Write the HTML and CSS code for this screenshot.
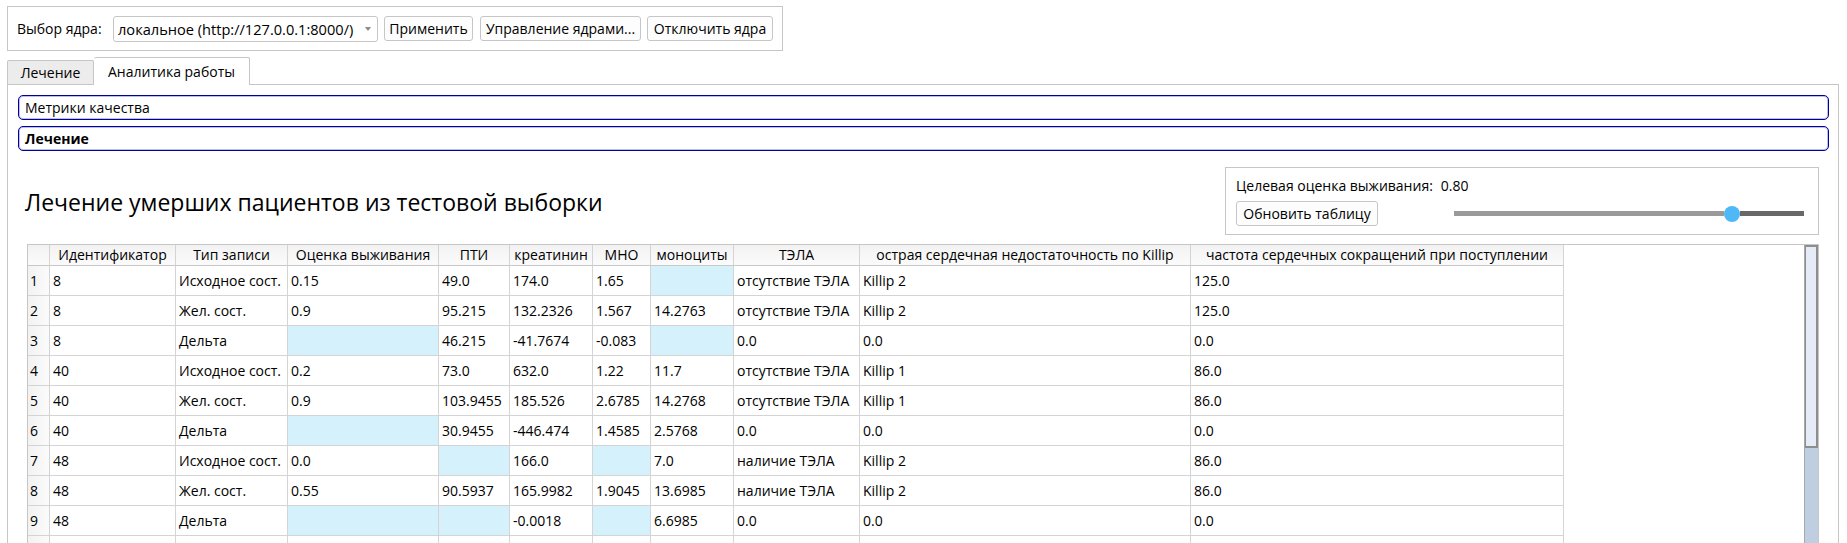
FILE: index.html
```html
<!DOCTYPE html>
<html lang="ru">
<head>
<meta charset="utf-8">
<title>Аналитика работы</title>
<link rel="stylesheet" href="styles.css">
</head>
<body>
<div class="app">
  <div class="kernel-bar">
    <span class="kb-label">Выбор ядра:</span>
    <div class="combo"><span class="combo-text">локальное (http://127.0.0.1:8000/)</span><span class="combo-arrow"></span></div>
    <button class="btn btn-apply">Применить</button>
    <button class="btn btn-manage">Управление ядрами...</button>
    <button class="btn btn-off">Отключить ядра</button>
  </div>

  <div class="tabs">
    <div class="tab">Лечение</div>
    <div class="tab tab-active">Аналитика работы</div>
  </div>

  <div class="pane">
    <div class="group">Метрики качества</div>
    <div class="group group-bold">Лечение</div>

    <div class="content">
      <div class="head-row">
        <h1 class="title">Лечение умерших пациентов из тестовой выборки</h1>
        <div class="panel">
          <div class="panel-row1">
            <span>Целевая оценка выживания:</span>
            <span class="panel-value">0.80</span>
          </div>
          <div class="panel-row2">
            <button class="btn btn-refresh">Обновить таблицу</button>
            <div class="slider">
              <div class="groove-left"></div>
              <div class="handle"></div>
              <div class="groove-right"></div>
            </div>
          </div>
        </div>
      </div>

      <div class="table-frame">
        <div class="grid">
          <div class="hc"></div>
          <div class="hc">Идентификатор</div>
          <div class="hc">Тип записи</div>
          <div class="hc">Оценка выживания</div>
          <div class="hc">ПТИ</div>
          <div class="hc">креатинин</div>
          <div class="hc">МНО</div>
          <div class="hc">моноциты</div>
          <div class="hc">ТЭЛА</div>
          <div class="hc">острая сердечная недостаточность по Killip</div>
          <div class="hc">частота сердечных сокращений при поступлении</div>

          <div class="rn">1</div><div class="c">8</div><div class="c">Исходное сост.</div><div class="c">0.15</div><div class="c">49.0</div><div class="c">174.0</div><div class="c">1.65</div><div class="c na"></div><div class="c">отсутствие ТЭЛА</div><div class="c">Killip 2</div><div class="c">125.0</div>

          <div class="rn">2</div><div class="c">8</div><div class="c">Жел. сост.</div><div class="c">0.9</div><div class="c">95.215</div><div class="c">132.2326</div><div class="c">1.567</div><div class="c">14.2763</div><div class="c">отсутствие ТЭЛА</div><div class="c">Killip 2</div><div class="c">125.0</div>

          <div class="rn">3</div><div class="c">8</div><div class="c">Дельта</div><div class="c na"></div><div class="c">46.215</div><div class="c">-41.7674</div><div class="c">-0.083</div><div class="c na"></div><div class="c">0.0</div><div class="c">0.0</div><div class="c">0.0</div>

          <div class="rn">4</div><div class="c">40</div><div class="c">Исходное сост.</div><div class="c">0.2</div><div class="c">73.0</div><div class="c">632.0</div><div class="c">1.22</div><div class="c">11.7</div><div class="c">отсутствие ТЭЛА</div><div class="c">Killip 1</div><div class="c">86.0</div>

          <div class="rn">5</div><div class="c">40</div><div class="c">Жел. сост.</div><div class="c">0.9</div><div class="c">103.9455</div><div class="c">185.526</div><div class="c">2.6785</div><div class="c">14.2768</div><div class="c">отсутствие ТЭЛА</div><div class="c">Killip 1</div><div class="c">86.0</div>

          <div class="rn">6</div><div class="c">40</div><div class="c">Дельта</div><div class="c na"></div><div class="c">30.9455</div><div class="c">-446.474</div><div class="c">1.4585</div><div class="c">2.5768</div><div class="c">0.0</div><div class="c">0.0</div><div class="c">0.0</div>

          <div class="rn">7</div><div class="c">48</div><div class="c">Исходное сост.</div><div class="c">0.0</div><div class="c na"></div><div class="c">166.0</div><div class="c na"></div><div class="c">7.0</div><div class="c">наличие ТЭЛА</div><div class="c">Killip 2</div><div class="c">86.0</div>

          <div class="rn">8</div><div class="c">48</div><div class="c">Жел. сост.</div><div class="c">0.55</div><div class="c">90.5937</div><div class="c">165.9982</div><div class="c">1.9045</div><div class="c">13.6985</div><div class="c">наличие ТЭЛА</div><div class="c">Killip 2</div><div class="c">86.0</div>

          <div class="rn">9</div><div class="c">48</div><div class="c">Дельта</div><div class="c na"></div><div class="c na"></div><div class="c">-0.0018</div><div class="c na"></div><div class="c">6.6985</div><div class="c">0.0</div><div class="c">0.0</div><div class="c">0.0</div>

          <div class="rn"></div><div class="c"></div><div class="c"></div><div class="c"></div><div class="c"></div><div class="c"></div><div class="c"></div><div class="c"></div><div class="c"></div><div class="c"></div><div class="c"></div>
        </div>
        <div class="scrollbar"><div class="thumb"></div></div>
      </div>
    </div>
  </div>
</div>
</body>
</html>
```

FILE: styles.css
```css
* {
  box-sizing: border-box;
}

html, body {
  margin: 0;
  padding: 0;
  background: #ffffff;
  overflow: hidden;
}

body {
  font-family: "Open Sans", "Noto Sans", sans-serif;
  font-size: 14px;
  color: #000;
  height: 543px;
}

.app {
  padding: 6px 0 0 7px;
}

/* ---------- kernel selector bar ---------- */
.kernel-bar {
  display: flex;
  align-items: flex-start;
  width: 776px;
  height: 45px;
  border: 1px solid #c6c6c6;
  padding: 9px 0 0 9px;
}

.kb-label {
  flex: 0 0 96px;
  line-height: 26px;
  white-space: nowrap;
}

.combo {
  flex: 0 0 265px;
  height: 26px;
  border: 1px solid #c6c6c6;
  border-radius: 3px;
  background: #fff;
  display: flex;
  align-items: center;
  justify-content: space-between;
  padding: 0 6px 0 4px;
  white-space: nowrap;
}

.combo-text {
  font-size: 14.6px;
}

.combo-arrow {
  width: 0;
  height: 0;
  border-left: 3.5px solid transparent;
  border-right: 3.5px solid transparent;
  border-top: 4px solid #8a8a8a;
}

.btn {
  font: inherit;
  color: #000;
  height: 25px;
  border: 1px solid #c6c6c6;
  border-radius: 3px;
  background: #fdfdfd;
  padding: 0;
  text-align: center;
  white-space: nowrap;
  cursor: default;
}

.btn-apply { margin-left: 6px; flex: 0 0 89px; }
.btn-manage { margin-left: 7px; flex: 0 0 161px; }
.btn-off { margin-left: 6px; flex: 0 0 126px; }

/* ---------- tabs ---------- */
.tabs {
  display: flex;
  align-items: flex-end;
  height: 27px;
  margin-top: 6px;
  position: relative;
  z-index: 1;
}

.tab {
  width: 87px;
  height: 24px;
  background: #ececec;
  border: 1px solid #c6c6c6;
  border-bottom: none;
  border-radius: 2px 2px 0 0;
  text-align: center;
  line-height: 23px;
}

.tab-active {
  width: 156px;
  height: 28px;
  margin-bottom: -1px;
  background: #fff;
  border-left: none;
  line-height: 27px;
}

/* ---------- pane ---------- */
.pane {
  width: 1832px;
  height: 470px;
  border: 1px solid #c6c6c6;
  border-bottom: none;
  padding: 10px 9px 0 10px;
}

.group {
  height: 25px;
  border: 1px solid #00009c;
  box-shadow: inset 0 0 0 1px rgba(40, 40, 190, 0.3);
  border-radius: 5px;
  padding-left: 6px;
  line-height: 23px;
  margin-bottom: 6px;
}

.group-bold {
  font-weight: bold;
}

.content {
  padding: 0 10px 0 9px;
}

.head-row {
  display: flex;
  align-items: center;
  justify-content: space-between;
  margin-top: 16px;
  height: 68px;
}

.title {
  margin: 2px 0 0 -2px;
  font-size: 23px;
  font-weight: normal;
}

.panel {
  width: 594px;
  height: 68px;
  border: 1px solid #c6c6c6;
  padding: 8px 14px 0 10px;
}

.panel-row1 {
  display: flex;
  gap: 8px;
  height: 20px;
  line-height: 20px;
}

.panel-row2 {
  display: flex;
  align-items: center;
  margin-top: 5px;
}

.btn-refresh {
  flex: 0 0 142px;
}

.slider {
  flex: 1;
  margin-left: 76px;
  display: flex;
  align-items: center;
  height: 16px;
}

.groove-left {
  flex: 0 0 270px;
  height: 5px;
  background: #9a9a9a;
}

.handle {
  flex: 0 0 16px;
  height: 16px;
  border-radius: 50%;
  background: #4fb8f7;
}

.groove-right {
  flex: 1;
  height: 5px;
  background: #686868;
}

/* ---------- table ---------- */
.table-frame {
  margin-top: 9px;
  height: 320px;
  border: 1px solid #c6c6c6;
  display: flex;
  justify-content: space-between;
}

.grid {
  display: grid;
  grid-template-columns: 22px 126px 112px 151px 71px 83px 58px 83px 126px 331px 373px;
  grid-auto-rows: 30px;
  grid-template-rows: 21px;
  align-content: start;
}

.hc {
  background: linear-gradient(#f2f2f2, #fbfbfb);
  border-right: 1px solid #d4d4d4;
  border-bottom: 1px solid #c8c8c8;
  text-align: center;
  line-height: 20px;
  white-space: nowrap;
  overflow: hidden;
}

.rn {
  background: linear-gradient(90deg, #f2f2f2, #fbfbfb);
  border-right: 1px solid #d4d4d4;
  border-bottom: 1px solid #d4d4d4;
  padding-left: 2px;
  line-height: 29px;
  overflow: hidden;
}

.c {
  border-right: 1px solid #d4d4d4;
  border-bottom: 1px solid #d4d4d4;
  padding-left: 3px;
  line-height: 29px;
  white-space: nowrap;
  overflow: hidden;
}

.na {
  background: #d4f1fc;
}

.scrollbar {
  width: 14px;
  height: 100%;
  background: #c0cee1;
  border-left: 1px solid #a8a8a8;
}

.thumb {
  height: 203px;
  background: #e5ecf7;
  border: 2px solid #8e8e8e;
  border-left-width: 1px;
}
```
